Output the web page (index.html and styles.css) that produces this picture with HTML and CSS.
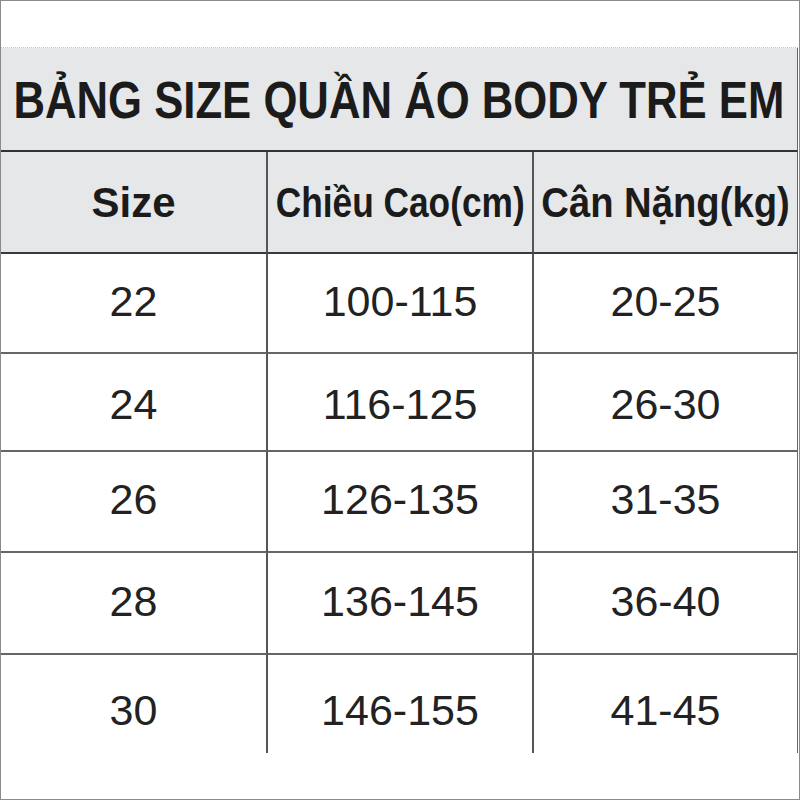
FILE: index.html
```html
<!DOCTYPE html>
<html lang="vi">
<head>
<meta charset="utf-8">
<title>Bảng size quần áo body trẻ em</title>
<link rel="stylesheet" href="styles.css">
</head>
<body>
<div class="frame">
  <div class="sheet">
    <div class="top"></div>
    <div class="title"><span class="title-text">BẢNG SIZE QUẦN ÁO BODY TRẺ EM</span></div>
    <div class="table">
      <div class="cell head"><span class="h-size">Size</span></div>
      <div class="cell head"><span class="h-height">Chiều Cao(cm)</span></div>
      <div class="cell head last"><span class="h-weight">Cân Nặng(kg)</span></div>

      <div class="cell">22</div>
      <div class="cell">100-115</div>
      <div class="cell last">20-25</div>

      <div class="cell low">24</div>
      <div class="cell low">116-125</div>
      <div class="cell last low">26-30</div>

      <div class="cell">26</div>
      <div class="cell">126-135</div>
      <div class="cell last">31-35</div>

      <div class="cell">28</div>
      <div class="cell">136-145</div>
      <div class="cell last">36-40</div>

      <div class="cell end">30</div>
      <div class="cell end">146-155</div>
      <div class="cell last end">41-45</div>
    </div>
  </div>
</div>
</body>
</html>
```
FILE: styles.css
```css
* { box-sizing: border-box; }
html, body { margin: 0; padding: 0; background: #ffffff; }
body { font-family: "Liberation Sans", Arial, sans-serif; color: #222; }

.frame {
  width: 800px;
  height: 800px;
  border: 1px solid #8a8a8a;
  background: #fff;
}

.sheet { width: 797px; }

.top {
  height: 47px;
  border-bottom: 1px dotted #c4c4c4;
}

.title {
  height: 104px;
  background: #e6e7e9;
  border-bottom: 2px solid #333;
  border-right: 1px solid #666;
  display: flex;
  align-items: center;
  justify-content: center;
  padding-top: 2px;
}

.title-text {
  display: inline-block;
  font-weight: bold;
  font-size: 52px;
  color: #1b1b1b;
  white-space: nowrap;
  transform: scaleX(0.84);
}

.table {
  display: grid;
  grid-template-columns: 267px 266px 264px;
  grid-template-rows: 102px 100px 98px 101px 102px 98px;
}

.cell {
  display: flex;
  align-items: center;
  justify-content: center;
  border-right: 2px solid #555;
  border-bottom: 2px solid #666;
  font-size: 43px;
  color: #222;
  padding-bottom: 4px;
}
.cell.low { padding-bottom: 0; padding-top: 4px; }
.cell.last { border-right: 1px solid #666; }
.cell.end { border-bottom: none; padding-bottom: 0; padding-top: 12px; }

.cell.head {
  background: #e6e7e9;
  border-bottom-color: #3a3a3a;
  font-weight: bold;
  font-size: 42px;
  color: #1b1b1b;
  padding-bottom: 0;
  padding-top: 2px;
}

.h-size, .h-height, .h-weight { display: inline-block; white-space: nowrap; }
.h-height { transform: scaleX(0.84); }
.h-weight { transform: scaleX(0.91); }
```
